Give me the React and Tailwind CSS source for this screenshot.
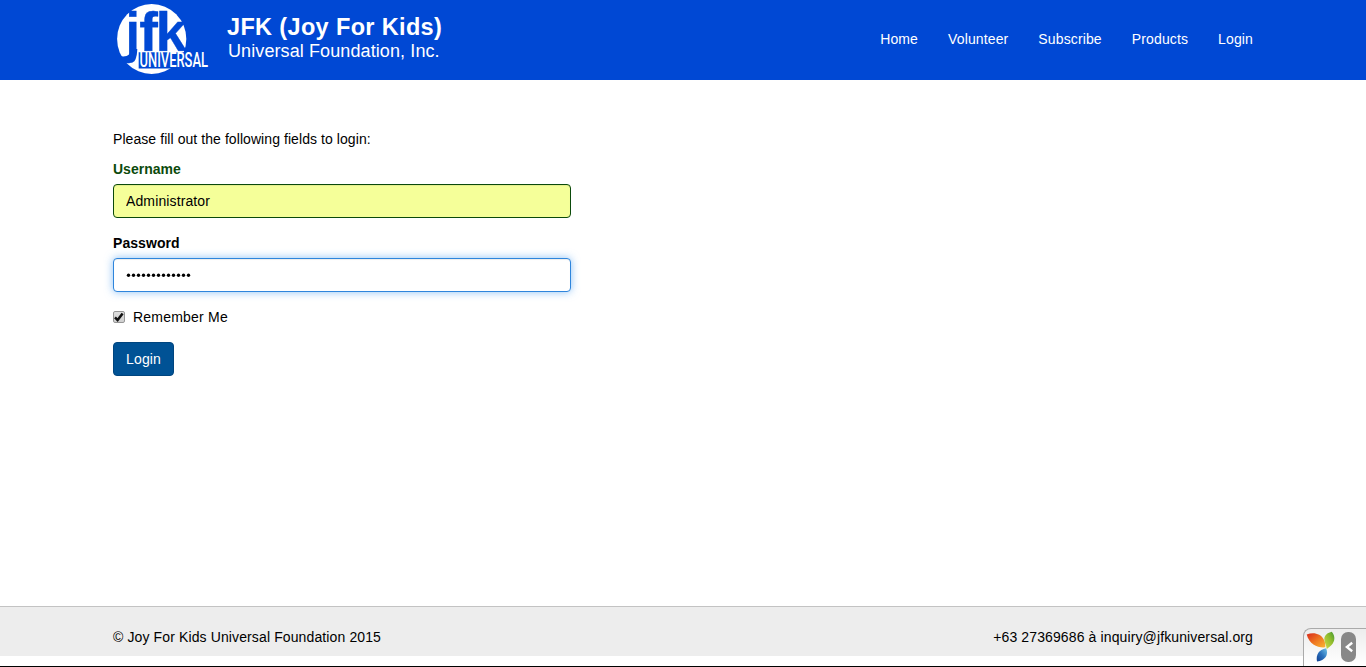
const navItems = ["Home", "Volunteer", "Subscribe", "Products", "Login"];

function Logo() {
  return (
    <svg className="block h-20 w-[100px] shrink-0 overflow-visible" viewBox="113 0 100 80" role="img" aria-label="JFK Universal">
      <ellipse cx="151.7" cy="39" rx="34.6" ry="35" fill="#fff" />
      <path d="M120 56C126 57.5 131.5 55 132 49L137.3 49C137.3 57 134 61.5 128 62L123 61.5Z" fill="#0048d4" />
      <g fill="#0048d4" stroke="#0048d4" fontFamily="'Liberation Sans', sans-serif" fontWeight="700" fontSize="56">
        <text transform="translate(125.4 50.5) scale(0.93 0.98)" strokeWidth="0.3">j</text>
        <text transform="translate(139.2 50.5)" strokeWidth="0.3">f</text>
        <text transform="translate(155.4 50.5)" strokeWidth="0.3">k</text>
      </g>
      <path d="M138.3 52.3H190V68.5H138.3Z" fill="#0048d4" />
      <path d="M138.2 51.4H184M138.2 51.4V69" fill="none" stroke="#fff" strokeWidth="0.8" />
      <text
        x="139.5"
        y="67.3"
        fill="#fff"
        fontFamily="Roboto, sans-serif"
        fontWeight="500"
        fontSize="19.3"
        textLength="68.5"
        lengthAdjust="spacingAndGlyphs"
      >
        UNIVERSAL
      </text>
    </svg>
  );
}

function Header() {
  return (
    <header className="h-20 bg-[#0048d4] text-white">
      <div className="mx-auto flex h-full w-[1140px] items-center">
        <Logo />
        <div className="ml-3.5 flex flex-col pb-0.5 whitespace-nowrap">
          <span className="text-[23.5px] leading-[24px] font-bold tracking-[0.35px]">JFK (Joy For Kids)</span>
          <span className="ml-px text-[18px] leading-[24px] tracking-[0.1px]">Universal Foundation, Inc.</span>
        </div>
        <nav className="ml-auto flex gap-[30px] pb-0.5 tracking-[0.13px]">
          {navItems.map((item) => (
            <a key={item} href="#">{item}</a>
          ))}
        </nav>
      </div>
    </header>
  );
}

function YiiLogo() {
  return (
    <svg className="h-8 w-[30px] shrink-0" viewBox="0 0 30 32">
      <defs>
        <linearGradient id="leafRed" x1="0" y1="0" x2="1" y2="1">
          <stop offset="0" stopColor="#d8291c" />
          <stop offset="0.5" stopColor="#ee7420" />
          <stop offset="1" stopColor="#fbb632" />
        </linearGradient>
        <linearGradient id="leafGreen" x1="0" y1="1" x2="1" y2="0">
          <stop offset="0" stopColor="#d5dc4c" />
          <stop offset="0.6" stopColor="#8ebb2c" />
          <stop offset="1" stopColor="#3f9634" />
        </linearGradient>
        <linearGradient id="leafBlue" x1="1" y1="0" x2="0" y2="1">
          <stop offset="0" stopColor="#72c4e9" />
          <stop offset="0.5" stopColor="#2a72bd" />
          <stop offset="1" stopColor="#123f92" />
        </linearGradient>
      </defs>
      <path d="M0.7 3.5C8 0.7 14.5 3 17.5 8C19 10.5 19.5 13.5 19.3 16.3C12 17 3.5 14 0.7 3.5Z" fill="url(#leafRed)" />
      <path d="M25.8 0.7C29.6 5 29 10.5 25.5 14C23.8 15.8 22 17 20.7 18.3C20.7 14.5 18.3 12 18.3 8.3C18.3 4 22 1.5 25.8 0.7Z" fill="url(#leafGreen)" />
      <path d="M20 17.3C23.2 23.5 19 29.7 11 30.5C9.6 24 13 18.5 20 17.3Z" fill="url(#leafBlue)" />
    </svg>
  );
}

function DebugToolbar() {
  return (
    <div className="fixed right-0 bottom-px flex h-[38px] w-[63px] rounded-tl-[8px] border-t border-l border-[#aaa] bg-linear-to-b from-[#ededed] to-white pt-[2px] pl-[2px]">
      <YiiLogo />
      <button className="mt-px ml-[5px] flex h-[30px] w-[15px] items-center justify-center rounded-[7px] bg-[#888]" aria-label="Toggle toolbar">
        <svg className="h-3 w-2" viewBox="0 0 8 12" fill="none" stroke="#fff" strokeWidth="2.4">
          <path d="M7.2 1.8L1.8 6L7.2 10.2" />
        </svg>
      </button>
    </div>
  );
}

function LoginForm() {
  return (
    <main className="mx-auto w-[1140px] flex-1 pt-[49px]">
      <p className="mb-2.5 tracking-[0.07px]">Please fill out the following fields to login:</p>
      <form className="flex w-[458px] flex-col items-start">
        <label className="mb-[5px] font-bold text-[#0b4a0b]" htmlFor="username">Username</label>
        <input
          id="username"
          readOnly
          defaultValue="Administrator"
          className="mb-[15px] h-[34px] w-full rounded border border-[#0b4a0b] bg-[#f5ff99] px-3 tracking-[0.12px] shadow-[inset_0_1px_1px_rgba(0,0,0,0.075)] outline-none"
        />
        <label className="mb-[5px] font-bold tracking-[0.06px]" htmlFor="password">Password</label>
        <div
          id="password"
          className="mb-[15px] flex h-[34px] w-full items-center rounded border border-[#2e85dc] bg-white px-3 shadow-[inset_0_1px_1px_rgba(0,0,0,0.075),0_0_8px_rgba(60,150,240,0.6)]"
        >
          <svg className="h-1 w-[66px]" viewBox="0 0 66 4" aria-label="Hidden password">
            {Array.from({ length: 13 }, (_, i) => (
              <circle key={i} cx={2.5 + i * 5} cy="2.3" r="1.7" />
            ))}
          </svg>
        </div>
        <div className="mb-[15px] flex items-center">
          <span className="flex size-3 items-center justify-center rounded-[2px] border border-[#969696] bg-linear-to-b from-[#dedede] to-[#cfcfcf]">
            <svg className="size-[10px]" viewBox="0 0 10 10" fill="none" stroke="#111" strokeWidth="2.5">
              <path d="M1 5.3L3.6 8L8.6 1.4" />
            </svg>
          </span>
          <span className="ml-2 tracking-[0.22px]">Remember Me</span>
        </div>
        <button type="button" className="h-[34px] w-[61px] rounded border border-[#00457f] bg-[#005295] tracking-[0.13px] text-white">
          Login
        </button>
      </form>
    </main>
  );
}

export default function App() {
  return (
    <div className="flex h-screen flex-col border-b border-black bg-white font-['Liberation_Sans',Arial,sans-serif] text-[14px] leading-5 text-black">
      <Header />
      <LoginForm />
      <footer className="mb-2.5 h-[50px] border-t border-[#c3c3c3] bg-[#ededed] pt-5 tracking-[0.12px]">
        <div className="mx-auto flex w-[1140px] justify-between">
          <span>© Joy For Kids Universal Foundation 2015</span>
          <span>+63 27369686 à inquiry@jfkuniversal.org</span>
        </div>
      </footer>
      <DebugToolbar />
    </div>
  );
}
